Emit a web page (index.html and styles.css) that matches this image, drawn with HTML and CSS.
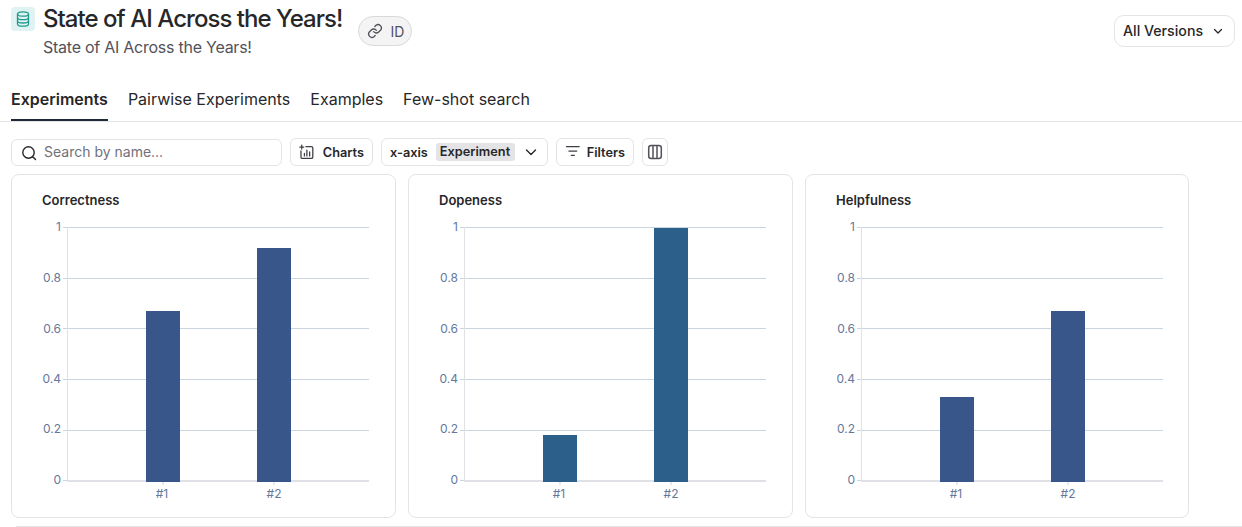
FILE: index.html
```html
<!DOCTYPE html>
<html lang="en">
<head>
    <meta charset="UTF-8">
    <title>State of AI Across the Years!</title>
    <link rel="stylesheet" href="styles.css">
</head>
<body>
    <svg class="defs" width="0" height="0">
        <defs>
            <g id="axes">
                <g class="grid">
                    <path d="M52 0.5H358M52 51.5H358M52 101.5H358M52 152.5H358M52 203.5H358"/>
                    <path d="M52 253.5H56"/>
                    <path d="M152 255V258M263 255V258"/>
                </g>
                <path class="y-line" d="M56.5 0V253"/>
                <g class="y-labels">
                    <text x="50" y="4">1</text>
                    <text x="50" y="55">0.8</text>
                    <text x="50" y="105.500">0.6</text>
                    <text x="50" y="156">0.4</text>
                    <text x="50" y="206">0.2</text>
                    <text x="50" y="257">0</text>
                </g>
                <g class="x-labels">
                    <text x="151" y="271">#1</text>
                    <text x="263" y="271">#2</text>
                </g>
            </g>
            <path id="x-line" class="x-line" d="M56 254H358"/>
        </defs>
    </svg>

    <header class="header">
        <div class="title-icon">
            <svg width="14" height="16" viewBox="0 0 14 16" fill="none" stroke="#1f9c8e" stroke-width="1.3">
                <ellipse cx="7" cy="3" rx="5.5" ry="2.2"/>
                <path d="M1.500 3V13C1.500 14.200 4 15.200 7 15.200S12.500 14.200 12.500 13V3"/>
                <path d="M1.500 6.400C1.500 7.600 4 8.600 7 8.600S12.500 7.600 12.500 6.400"/>
                <path d="M1.500 9.800C1.500 11 4 12 7 12S12.500 11 12.500 9.800"/>
            </svg>
        </div>
        <div class="title-text">
            <h1>State of AI Across the Years!</h1>
            <p>State of AI Across the Years!</p>
        </div>
        <div class="id-pill">
            <svg width="16" height="16" viewBox="0 0 24 24" fill="none" stroke="#52525b" stroke-width="2" stroke-linecap="round" stroke-linejoin="round">
                <path d="M10 13a5 5 0 0 0 7.500.5l3-3a5 5 0 0 0-7-7l-1.700 1.700"/>
                <path d="M14 11a5 5 0 0 0-7.500-.5l-3 3a5 5 0 0 0 7 7l1.700-1.700"/>
            </svg>
            <span>ID</span>
        </div>
        <button class="btn versions">
            <span class="versions-label">All Versions</span>
            <svg width="12" height="12" viewBox="0 0 12 12" fill="none" stroke="#27272a" stroke-width="1.300" stroke-linecap="round" stroke-linejoin="round"><path d="M2.500 4.500L6 8l3.500-3.500"/></svg>
        </button>
    </header>

    <nav class="tabs">
        <a class="tab active">Experiments</a>
        <a class="tab">Pairwise Experiments</a>
        <a class="tab">Examples</a>
        <a class="tab">Few-shot search</a>
    </nav>

    <div class="toolbar">
        <div class="search">
            <svg width="16" height="16" viewBox="0 0 16 16" fill="none" stroke="#27272a" stroke-width="1.400" stroke-linecap="round"><circle cx="7.500" cy="7.500" r="5.700"/><path d="M11.700 11.700L14.500 14.500"/></svg>
            <span class="search-text">Search by name...</span>
        </div>
        <button class="btn small charts">
            <svg width="16" height="16" viewBox="0 0 16 16" fill="none" stroke="#3f3f46" stroke-width="1.300" stroke-linecap="round"><path d="M7 2.500H12.500A1.500 1.500 0 0 1 14 4V13A1.500 1.500 0 0 1 12.500 14.500H3.500A1.500 1.500 0 0 1 2 13V7"/><path d="M2.800 1V5M.8 3H4.800M5.500 12V9.500M8 12V6M10.800 12V8"/></svg>
            Charts
        </button>
        <button class="btn small xaxis">
            x-axis
            <span class="tag">Experiment</span>
            <svg class="caret" width="14" height="14" viewBox="0 0 14 14" fill="none" stroke="#27272a" stroke-width="1.400" stroke-linecap="round" stroke-linejoin="round"><path d="M2.500 5L7 9.500 11.500 5"/></svg>
        </button>
        <button class="btn small filters">
            <svg width="16" height="16" viewBox="0 0 16 16" fill="none" stroke="#3f3f46" stroke-width="1.300" stroke-linecap="round"><path d="M1.500 2.500H14.500M4 7H12M6.500 11.500H9.500"/></svg>
            Filters
        </button>
        <button class="btn small columns">
            <svg width="16" height="16" viewBox="0 0 16 16" fill="none" stroke="#52525b" stroke-width="1.500"><rect x="1.700" y="1.500" width="12.600" height="13" rx="2.500"/><path d="M6 1.500V14.500M10 1.500V14.500"/></svg>
        </button>
    </div>

    <div class="charts-grid">
        <section class="card">
            <h3>Correctness</h3>
            <svg class="chart" width="360" height="280" viewBox="1 0 360 280">
                <use href="#axes"/>
                <use href="#x-line"/>
                <rect class="bar blue" x="135" y="84" width="34" height="171"/>
                <rect class="bar blue" x="246" y="21" width="34" height="234"/>
            </svg>
        </section>
        <section class="card">
            <h3>Dopeness</h3>
            <svg class="chart" width="360" height="280" viewBox="1 0 360 280">
                <use href="#axes"/>
                <use href="#x-line"/>
                <rect class="bar teal" x="135" y="208" width="34" height="47"/>
                <rect class="bar teal" x="246" y="1" width="34" height="254"/>
            </svg>
        </section>
        <section class="card">
            <h3>Helpfulness</h3>
            <svg class="chart" width="360" height="280" viewBox="1 0 360 280">
                <use href="#axes"/>
                <use href="#x-line"/>
                <rect class="bar blue" x="135" y="170" width="34" height="85"/>
                <rect class="bar blue" x="246" y="84" width="34" height="171"/>
            </svg>
        </section>
    </div>

    <div class="bottom-line"></div>
</body>
</html>
```

FILE: styles.css
```css
* { box-sizing: border-box; }

html, body { height: 527px; overflow: hidden; }

body {
    margin: 0;
    background: #fff;
    color: #27272a;
    font-family: Inter, "Liberation Sans", sans-serif;
}

.defs { display: block; height: 0; }

/* header */
.header {
    display: flex;
    align-items: flex-start;
    height: 74px;
    padding: 7px 7px 0 11px;
}

.title-icon {
    display: flex;
    align-items: center;
    justify-content: center;
    width: 24px;
    height: 24px;
    border-radius: 4px;
    background: #e0f2f1;
}

.title-text { margin-left: 8px; }

.title-text h1 {
    margin: 0;
    font-size: 24px;
    line-height: 24px;
    font-weight: 500;
    letter-spacing: -0.96px;
    color: #27272a;
}

.title-text p {
    margin: 6px 0 0;
    font-size: 16px;
    line-height: 20px;
    letter-spacing: -0.25px;
    color: #52525b;
}

.id-pill {
    display: flex;
    align-items: center;
    gap: 7px;
    height: 30px;
    margin: 9px 0 0 16px;
    padding: 0 7px 0 8px;
    border: 1px solid #d9d9dc;
    border-radius: 15px;
    background: #f4f4f5;
    font-size: 14px;
    color: #52525b;
}

.btn {
    display: flex;
    align-items: center;
    border: 1px solid #e4e4e7;
    border-radius: 8px;
    background: #fff;
    color: #27272a;
    font-family: inherit;
    font-size: 14px;
    font-weight: 500;
    padding: 0 8px;
    white-space: nowrap;
}

.versions {
    gap: 9px;
    width: 121px;
    height: 32px;
    margin: 8px 0 0 auto;
    border-radius: 10px;
}

.versions-label {
    font-size: 14.200px;
    margin-bottom: 2px;
}

/* tabs */
.tabs {
    display: flex;
    gap: 20px;
    height: 48px;
    padding-left: 11px;
    border-bottom: 1px solid #e4e4e7;
}

.tab {
    height: 47px;
    padding-top: 15px;
    font-size: 16px;
    line-height: 20px;
    color: #27272a;
}

.tab.active {
    font-weight: 600;
    border-bottom: 2px solid #1f2937;
}

/* toolbar */
.toolbar {
    display: flex;
    align-items: flex-end;
    gap: 8px;
    height: 28px;
    margin: 16px 0 8px;
    padding-left: 11px;
}

.search {
    display: flex;
    align-items: center;
    gap: 7px;
    width: 271px;
    height: 27px;
    padding: 0 9px;
    border: 1px solid #e4e4e7;
    border-radius: 6px;
    font-size: 14px;
    color: #71717a;
}

.search-text { margin-bottom: 2px; }

.btn.small {
    height: 28px;
    font-size: 12.750px;
    font-weight: 600;
    border-radius: 6px;
}

.charts { gap: 8px; width: 83px; }
.xaxis { width: 167px; }
.filters { gap: 6px; width: 78px; }
.columns { width: 26px; padding: 0 4px; }

.tag {
    margin-left: 8px;
    padding: 2px 5px 2px 4px;
    border-radius: 3px;
    background: #e4e4e7;
    line-height: 14px;
}

.caret { margin-left: 9px; }

/* charts */
.charts-grid {
    display: grid;
    grid-template-columns: 385px 385px 384px;
    gap: 12px;
    margin-left: 11px;
}

.card {
    height: 344px;
    padding: 18px 0 0;
    border: 1px solid #e4e4e7;
    border-radius: 8px;
}

.card h3 {
    margin: 0 0 20px 30px;
    font-size: 13px;
    line-height: 14px;
    font-weight: 600;
    color: #27272a;
}

.chart { display: block; overflow: visible; }

.grid path { stroke: #c9d5e1; fill: none; }
.y-line { stroke: #dfe3e8; fill: none; }
.x-line { stroke: #dfe1e6; stroke-width: 2; fill: none; }

.y-labels text, .x-labels text {
    font-family: Inter, "Liberation Sans", sans-serif;
    font-size: 12px;
    fill: #64789b;
}

.y-labels text { text-anchor: end; }
.x-labels text { text-anchor: middle; }

.bar.blue { fill: #38568a; }
.bar.teal { fill: #2d5f8b; }

.bottom-line {
    height: 1px;
    margin: 8px 0 0 16px;
    background: #e4e4e7;
}
```
